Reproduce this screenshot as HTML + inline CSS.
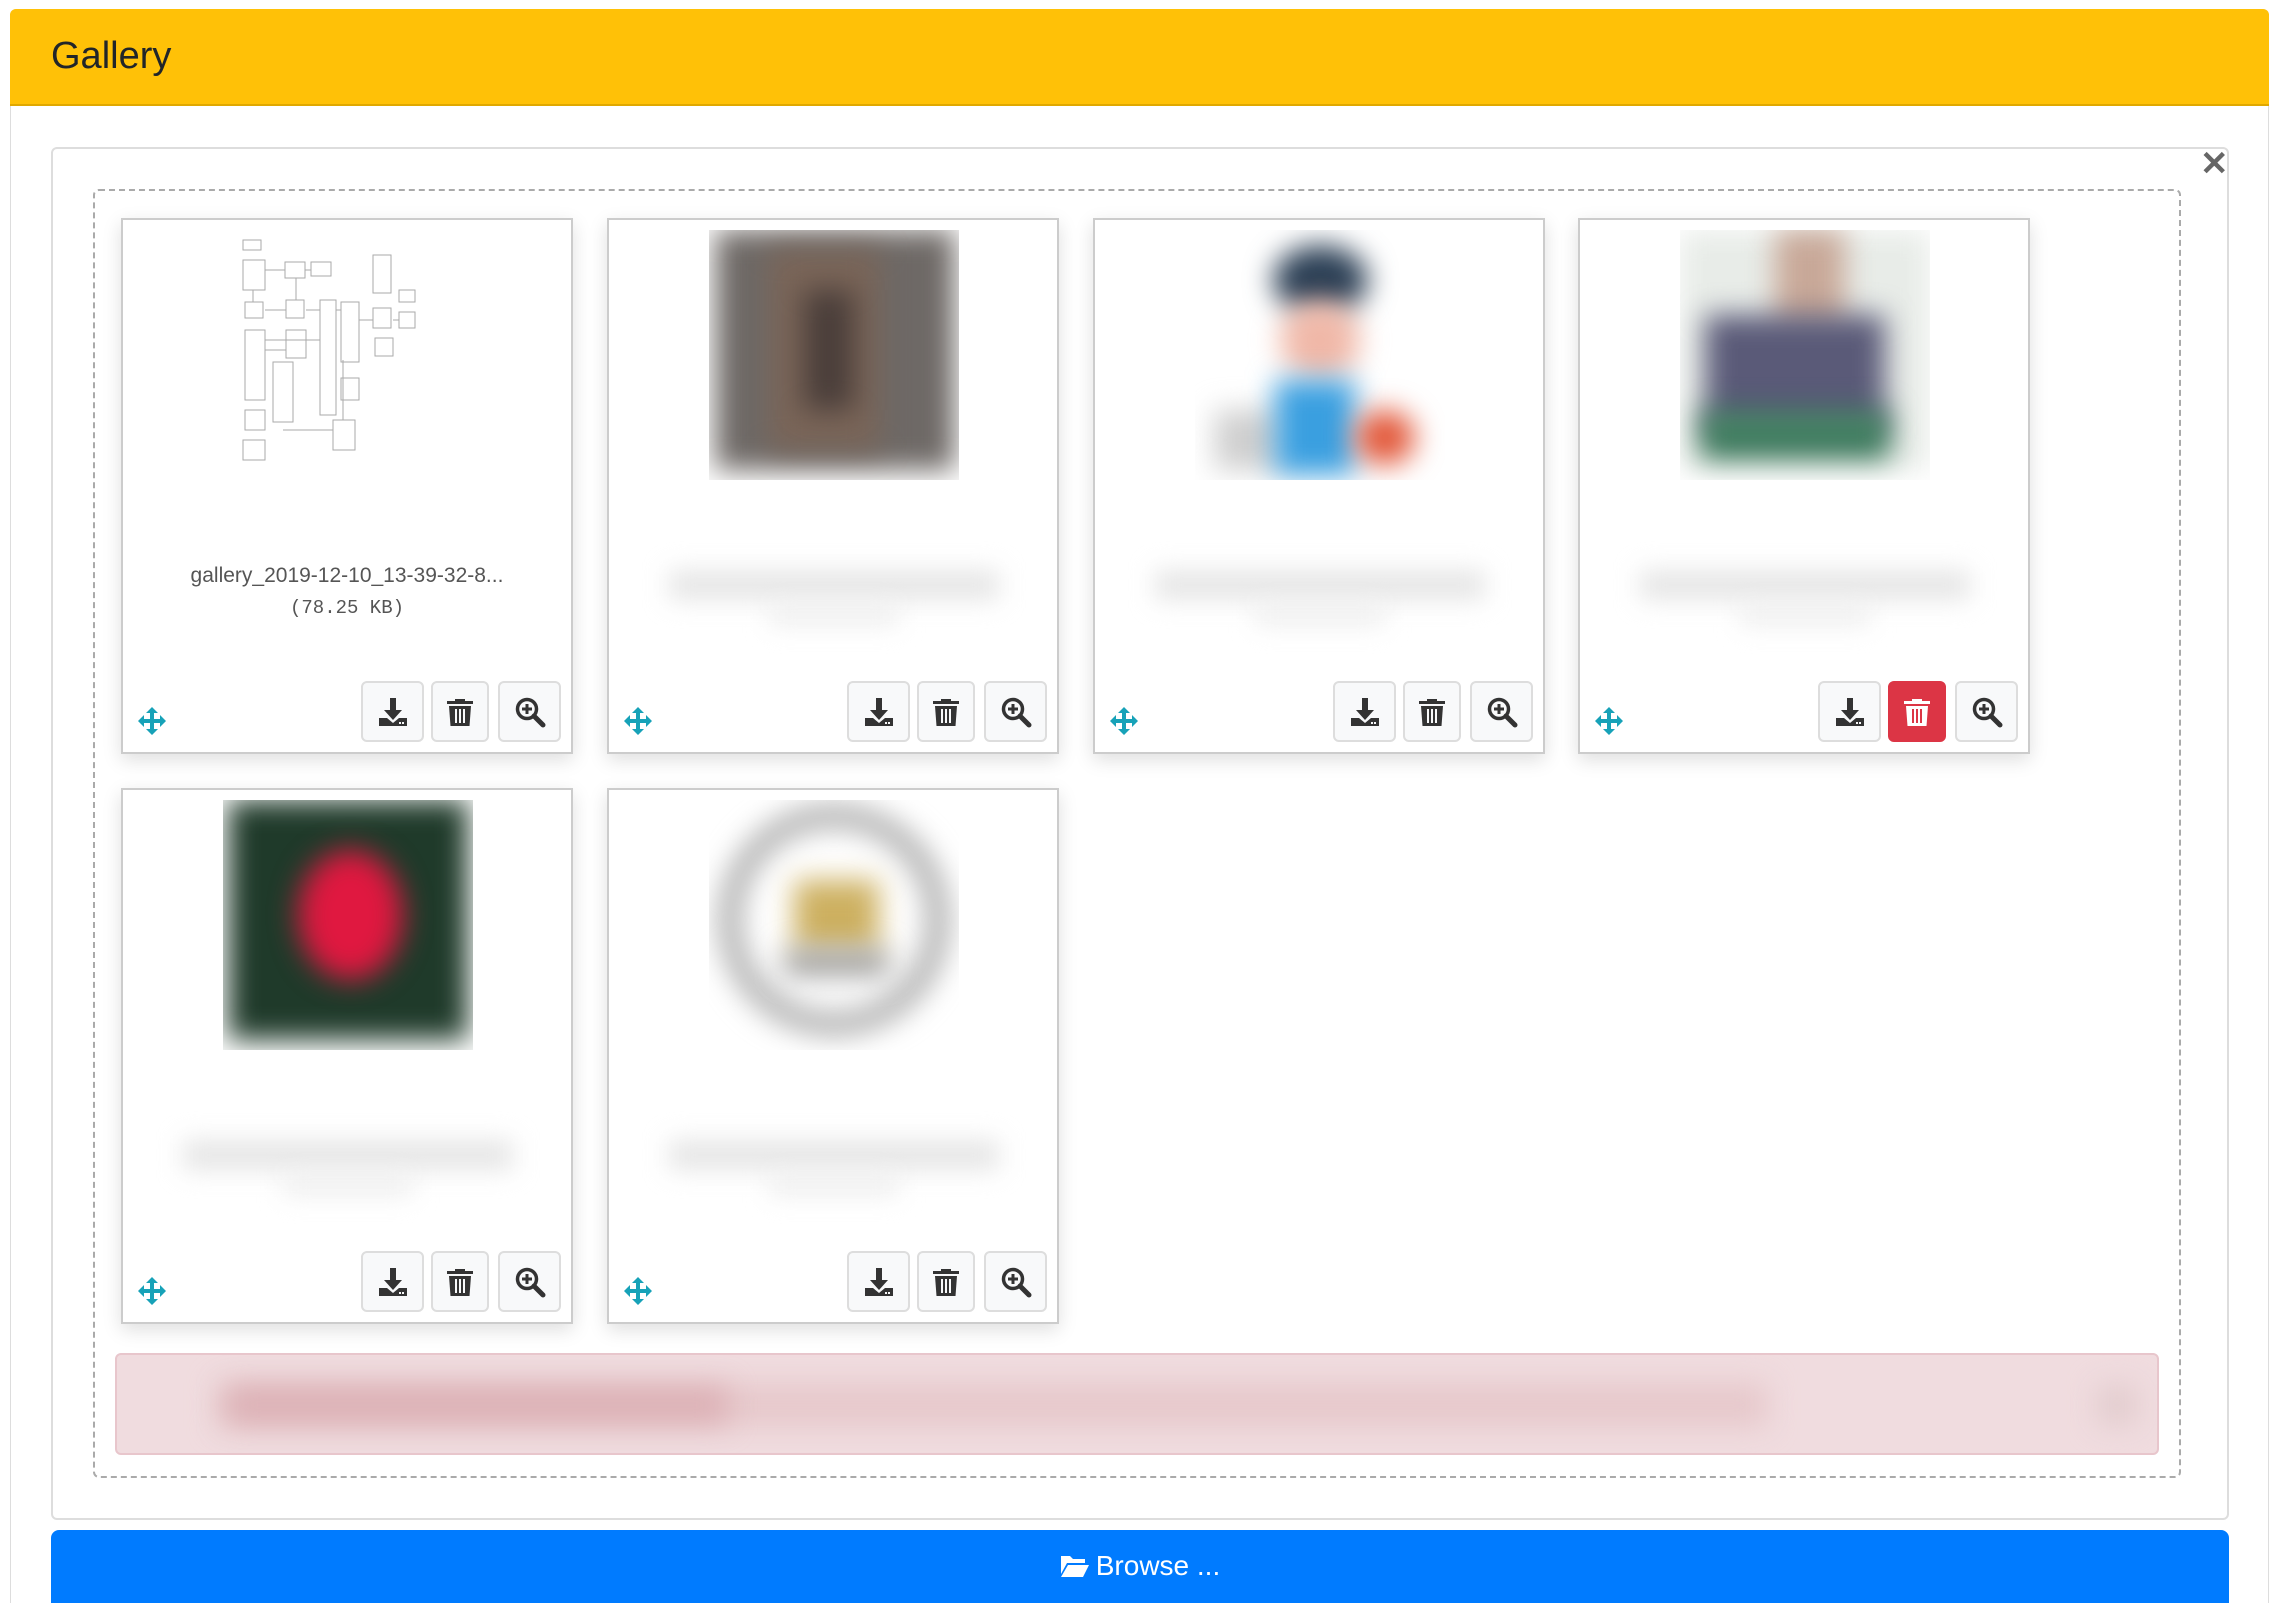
<!DOCTYPE html>
<html><head><meta charset="utf-8"><style>
*{box-sizing:border-box;margin:0;padding:0}
html,body{width:2281px;height:1603px;overflow:hidden}
body{background:#fff;position:relative;font-family:"Liberation Sans",sans-serif}
.outer{position:absolute;left:10px;top:9px;width:2259px;height:1594px;border:1px solid #ddd;border-bottom:none;border-radius:6px 6px 0 0;background:#fff}
.hdr{position:absolute;left:10px;top:9px;width:2259px;height:97px;background:#ffc107;border-bottom:2px solid #e0a800;border-radius:6px 6px 0 0}
.hdr span{position:absolute;left:41px;top:26px;font-size:38px;color:#212529}
.panel{position:absolute;left:51px;top:147px;width:2178px;height:1373px;border:2px solid #ddd;border-radius:6px}
.x{position:absolute;left:2200px;top:144px;font-size:34px;color:#666;font-weight:bold}
.drop{position:absolute;left:93px;top:189px;width:2088px;height:1289px;border:2px dashed #aaa;border-radius:6px}
.card{position:absolute;width:452px;height:536px;background:#fff;border:2px solid #ccc;box-shadow:0 6px 18px rgba(0,0,0,.13)}
.img{position:absolute;left:100px;top:10px;width:250px;height:250px;overflow:hidden}
.b{position:absolute;filter:blur(14px)}
.cap{position:absolute;left:0;width:100%;text-align:center;color:#555}
.bl{position:absolute;height:30px;background:#e6e6e6;filter:blur(12px)}
.btn{position:absolute;top:461px;height:61px;border:2px solid #ddd;border-radius:6px;background:#f8f9fa;display:flex;align-items:center;justify-content:center}
.btn svg{width:32px;height:32px}
.mv{position:absolute;left:15px;top:487px;width:28px;height:28px}
.alert{position:absolute;left:115px;top:1353px;width:2044px;height:102px;background:#f0dcdf;border:2px solid #e8c6cc;border-radius:6px;overflow:hidden}
.browse{position:absolute;left:51px;top:1530px;width:2178px;height:90px;background:#007bff;border-radius:8px;color:#fff;font-size:28px;text-align:center;padding-top:20px}
</style></head><body>
<div class="outer"></div>
<div class="hdr"><span>Gallery</span></div>
<div class="panel"></div>
<div class="x">✕</div>
<div class="drop"></div>

<svg width="0" height="0" style="position:absolute">
<defs>
<symbol id="dl" viewBox="0 0 32 32"><path d="M13 2h6v12h6l-9 10-9-10h6z" fill="#333"/><path d="M2 22h8l6 5 6-5h8v8H2z" fill="#333"/><rect x="22" y="26" width="2" height="2" fill="#f8f9fa"/><rect x="25" y="26" width="2" height="2" fill="#f8f9fa"/></symbol>
<symbol id="tr" viewBox="0 0 32 32"><path d="M11 3h10v2h8v3H3V5h8z" fill="#333"/><path d="M5 10h22l-1.5 20h-19z" fill="#333"/><rect x="11" y="13" width="2" height="14" fill="#f8f9fa"/><rect x="15" y="13" width="2" height="14" fill="#f8f9fa"/><rect x="19" y="13" width="2" height="14" fill="#f8f9fa"/></symbol>
<symbol id="trw" viewBox="0 0 32 32"><path d="M11 3h10v2h8v3H3V5h8z" fill="#fff"/><path d="M5 10h22l-1.5 20h-19z" fill="#fff"/><rect x="11" y="13" width="2" height="14" fill="#dc3545"/><rect x="15" y="13" width="2" height="14" fill="#dc3545"/><rect x="19" y="13" width="2" height="14" fill="#dc3545"/></symbol>
<symbol id="zm" viewBox="0 0 32 32"><circle cx="13" cy="13" r="9.5" fill="none" stroke="#333" stroke-width="3.5"/><path d="M20 20l9 9" stroke="#333" stroke-width="5" stroke-linecap="round"/><path d="M13 8v10M8 13h10" stroke="#333" stroke-width="3"/></symbol>
<symbol id="mv" viewBox="0 0 28 28"><path d="M14 0l6 6h-4v6h6V8l6 6-6 6v-4h-6v6h4l-6 6-6-6h4v-6H6v4l-6-6 6-6v4h6V6H8z" fill="#17a2b8"/></symbol>
</defs></svg>

<!-- Card 1 -->
<div class="card" style="left:121px;top:218px">
 <div class="img">
  <svg width="250" height="250" viewBox="0 0 250 250">
   <g fill="none" stroke="#aaa" stroke-width="1">
    <rect x="20" y="10" width="18" height="10"/><rect x="20" y="30" width="22" height="30"/><rect x="62" y="32" width="20" height="16"/><rect x="88" y="32" width="20" height="14"/>
    <rect x="22" y="72" width="18" height="16"/><rect x="63" y="70" width="18" height="18"/><rect x="22" y="100" width="20" height="70"/><rect x="63" y="100" width="20" height="28"/>
    <rect x="50" y="132" width="20" height="60"/><rect x="97" y="70" width="16" height="115"/><rect x="118" y="72" width="18" height="60"/><rect x="150" y="25" width="18" height="38"/>
    <rect x="150" y="78" width="18" height="20"/><rect x="152" y="108" width="18" height="18"/><rect x="176" y="60" width="16" height="12"/><rect x="176" y="82" width="16" height="16"/>
    <rect x="22" y="180" width="20" height="20"/><rect x="118" y="148" width="18" height="22"/><rect x="20" y="210" width="22" height="20"/><rect x="110" y="190" width="22" height="30"/>
    <path d="M42 40h20M82 40h6M42 80h21M83 80h14M42 110h55M42 120h21M113 80h5M136 90h14M170 90h6M30 60v12M73 48v22M120 130v60M60 200h50"/>
   </g>
  </svg>
 </div>
 <div class="cap" style="top:344px;font-size:21px;color:#555">gallery_2019-12-10_13-39-32-8...</div>
 <div class="cap" style="top:377px;font-size:19px;font-family:'Liberation Mono',monospace;color:#555">(78.25 KB)</div>
 <svg class="mv"><use href="#mv"/></svg>
 <div class="btn" style="left:238px;width:63px"><svg><use href="#dl"/></svg></div>
 <div class="btn" style="left:308px;width:58px"><svg><use href="#tr"/></svg></div>
 <div class="btn" style="left:375px;width:63px"><svg><use href="#zm"/></svg></div>
</div>

<!-- Card 2 -->
<div class="card" style="left:607px;top:218px">
 <div class="img">
  <div class="b" style="left:6px;top:0;width:240px;height:240px;background:#6e6966"></div>
  <div class="b" style="left:60px;top:20px;width:110px;height:200px;background:#7a6558"></div>
  <div class="b" style="left:95px;top:60px;width:50px;height:120px;background:#4a3e3a"></div>
 </div>
 <div class="bl" style="left:60px;top:350px;width:330px"></div>
 <div class="bl" style="left:160px;top:385px;width:130px;height:20px;background:#eee"></div>
 <svg class="mv"><use href="#mv"/></svg>
 <div class="btn" style="left:238px;width:63px"><svg><use href="#dl"/></svg></div>
 <div class="btn" style="left:308px;width:58px"><svg><use href="#tr"/></svg></div>
 <div class="btn" style="left:375px;width:63px"><svg><use href="#zm"/></svg></div>
</div>

<!-- Card 3 -->
<div class="card" style="left:1093px;top:218px">
 <div class="img">
  <div class="b" style="left:78px;top:15px;width:95px;height:70px;border-radius:50%;background:#2b3f55"></div>
  <div class="b" style="left:85px;top:70px;width:80px;height:80px;border-radius:50%;background:#f0b8a8"></div>
  <div class="b" style="left:20px;top:180px;width:70px;height:60px;background:#cfcfcf"></div>
  <div class="b" style="left:80px;top:150px;width:80px;height:95px;background:#3a9fe0"></div>
  <div class="b" style="left:160px;top:180px;width:60px;height:55px;border-radius:50%;background:#e2583a"></div>
 </div>
 <div class="bl" style="left:60px;top:350px;width:330px"></div>
 <div class="bl" style="left:160px;top:385px;width:130px;height:20px;background:#eee"></div>
 <svg class="mv"><use href="#mv"/></svg>
 <div class="btn" style="left:238px;width:63px"><svg><use href="#dl"/></svg></div>
 <div class="btn" style="left:308px;width:58px"><svg><use href="#tr"/></svg></div>
 <div class="btn" style="left:375px;width:63px"><svg><use href="#zm"/></svg></div>
</div>

<!-- Card 4 -->
<div class="card" style="left:1578px;top:218px">
 <div class="img">
  <div class="b" style="left:0;top:0;width:250px;height:240px;background:#e8ece8"></div>
  <div class="b" style="left:95px;top:0;width:70px;height:100px;background:#c8a898"></div>
  <div class="b" style="left:25px;top:85px;width:180px;height:120px;background:#5a5a78"></div>
  <div class="b" style="left:20px;top:180px;width:190px;height:50px;background:#3f7d5f"></div>
 </div>
 <div class="bl" style="left:60px;top:350px;width:330px"></div>
 <div class="bl" style="left:160px;top:385px;width:130px;height:20px;background:#eee"></div>
 <svg class="mv"><use href="#mv"/></svg>
 <div class="btn" style="left:238px;width:63px"><svg><use href="#dl"/></svg></div>
 <div class="btn" style="left:308px;width:58px;background:#dc3545;border-color:#dc3545"><svg><use href="#trw"/></svg></div>
 <div class="btn" style="left:375px;width:63px"><svg><use href="#zm"/></svg></div>
</div>

<!-- Card 5 -->
<div class="card" style="left:121px;top:788px">
 <div class="img">
  <div class="b" style="left:5px;top:0;width:240px;height:240px;background:#1f3a2a"></div>
  <div class="b" style="left:75px;top:50px;width:105px;height:130px;border-radius:50%;background:#e01840"></div>
 </div>
 <div class="bl" style="left:60px;top:350px;width:330px"></div>
 <div class="bl" style="left:160px;top:385px;width:130px;height:20px;background:#eee"></div>
 <svg class="mv"><use href="#mv"/></svg>
 <div class="btn" style="left:238px;width:63px"><svg><use href="#dl"/></svg></div>
 <div class="btn" style="left:308px;width:58px"><svg><use href="#tr"/></svg></div>
 <div class="btn" style="left:375px;width:63px"><svg><use href="#zm"/></svg></div>
</div>

<!-- Card 6 -->
<div class="card" style="left:607px;top:788px">
 <div class="img">
  <div class="b" style="left:10px;top:5px;width:230px;height:230px;border-radius:50%;border:22px solid #aaa"></div>
  <div class="b" style="left:85px;top:80px;width:85px;height:70px;background:#cdb060"></div>
  <div class="b" style="left:75px;top:150px;width:105px;height:25px;background:#999"></div>
 </div>
 <div class="bl" style="left:60px;top:350px;width:330px"></div>
 <div class="bl" style="left:160px;top:385px;width:130px;height:20px;background:#eee"></div>
 <svg class="mv"><use href="#mv"/></svg>
 <div class="btn" style="left:238px;width:63px"><svg><use href="#dl"/></svg></div>
 <div class="btn" style="left:308px;width:58px"><svg><use href="#tr"/></svg></div>
 <div class="btn" style="left:375px;width:63px"><svg><use href="#zm"/></svg></div>
</div>

<div class="alert">
 <div class="b" style="left:100px;top:28px;width:1550px;height:44px;background:#e6c8cb"></div>
 <div class="b" style="left:110px;top:32px;width:500px;height:36px;background:#dcb0b5"></div>
 <div class="b" style="left:1980px;top:30px;width:40px;height:40px;background:#e2ccce"></div>
</div>

<div class="browse"><svg width="30" height="24" viewBox="0 0 30 24" style="vertical-align:-3px;margin-right:6px"><path d="M1 2h9l3 3h12v4H7L1 20z" fill="#fff"/><path d="M8 11h21l-6 12H1z" fill="#fff"/></svg>Browse ...</div>
</body></html>
